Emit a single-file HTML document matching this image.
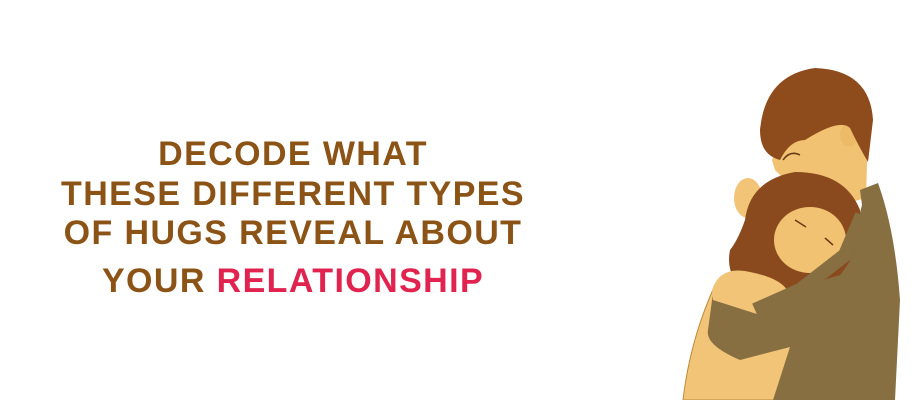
<!DOCTYPE html>
<html><head><meta charset="utf-8"><style>
html,body{margin:0;padding:0;background:#fff;}
body{width:921px;height:400px;position:relative;overflow:hidden;font-family:"Liberation Sans",sans-serif;}
.t{position:absolute;left:0;width:586px;text-align:center;font-weight:bold;font-size:34px;letter-spacing:1.4px;color:#8B5316;line-height:34px;white-space:nowrap;}
.p{color:#E0244F;}
svg{position:absolute;left:0;top:0;}
</style></head><body>
<div class="t" style="top:137px">DECODE WHAT</div>
<div class="t" style="top:177px">THESE DIFFERENT TYPES</div>
<div class="t" style="top:216px">OF HUGS REVEAL ABOUT</div>
<div class="t" style="top:264px">YOUR <span class="p">RELATIONSHIP</span></div>
<svg width="921" height="400" viewBox="0 0 921 400">
<path d="M715,285 Q690,340 683,400 L800,400 L800,300 Z" fill="#F2C477" stroke="#C08A3A" stroke-width="1"/>
<path d="M772,160 Q785,125 830,120 L868,130 L866,198 L840,205 L790,185 L775,170 Z" fill="#F0C272"/>
<ellipse cx="849" cy="135" rx="9" ry="12" fill="#EDBB68"/>
<path d="M760,130 Q765,75 815,68 Q870,70 873,120 L868,162 Q858,145 850,128 Q840,118 805,140 Q790,140 780,160 Q760,155 760,130 Z" fill="#8E4B1C"/>
<path d="M783,160 Q790,150 800,155" stroke="#6a3a18" stroke-width="1.5" fill="none"/>
<path d="M860,190 L878,183 Q895,230 900,300 L895,400 L773,400 L790,347 L740,360 Q705,345 708,330 L713,293 Q735,300 757,307 L820,270 L853,240 L862,205 Z" fill="#876F42"/>
<ellipse cx="748" cy="198" rx="14" ry="20" fill="#F2C477"/>
<path d="M745,220 Q750,180 795,172 Q845,172 860,210 Q862,250 840,275 L790,290 Q760,300 745,290 Q725,275 730,250 Q738,240 745,220 Z" fill="#8A4A1E"/>
<ellipse cx="810" cy="240" rx="36" ry="33" fill="#F0C272"/>
<path d="M795,220 L806,227 M825,238 L833,245" stroke="#6a3a18" stroke-width="1.5" fill="none"/>
<path d="M712,290 Q720,265 750,272 Q790,280 790,300 L760,315 L713,300 Z" fill="#F2C477"/>
<path d="M755,310 L800,290 L845,255 L862,215" stroke="#876F42" stroke-width="14" fill="none"/>
</svg>
</body></html>
